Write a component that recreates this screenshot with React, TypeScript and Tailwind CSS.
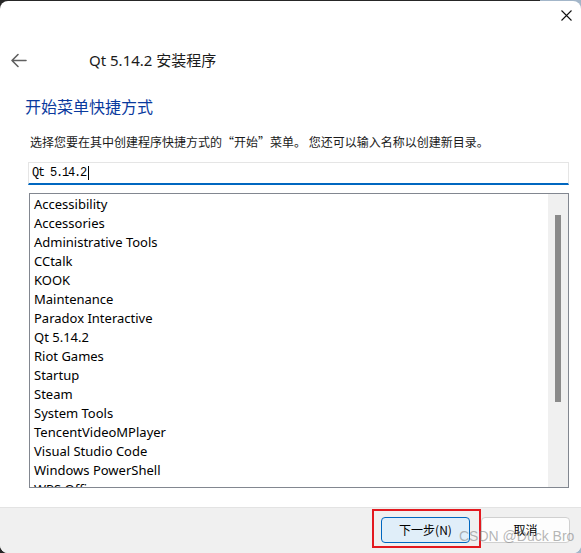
import React from 'react';

const folders = [
  'Accessibility',
  'Accessories',
  'Administrative Tools',
  'CCtalk',
  'KOOK',
  'Maintenance',
  'Paradox Interactive',
  'Qt 5.14.2',
  'Riot Games',
  'Startup',
  'Steam',
  'System Tools',
  'TencentVideoMPlayer',
  'Visual Studio Code',
  'Windows PowerShell',
  'WPS Office',
];

const uiFont = "font-['Noto_Sans','Noto_Sans_CJK_SC',sans-serif]";
const cjkFont = "font-['Noto_Sans_CJK_SC',sans-serif]";

const App: React.FC = () => {
  return (
    <div className="w-[581px] h-[553px] overflow-hidden bg-[linear-gradient(to_right,#262626_93%,#a3b6c9_93%)] pt-px">
      {/* ── Window ── */}
      <div className="relative flex flex-col h-[552px] bg-white rounded-[8px] overflow-hidden">
        {/* Title bar */}
        <div className="flex justify-end h-[44px] pt-[9px] pr-[9px]">
          <svg width="11" height="11" viewBox="0 0 11 11" className="shrink-0">
            <path d="M0.5 0.5L10.5 10.5M10.5 0.5L0.5 10.5" stroke="#111" strokeWidth="1.1" />
          </svg>
        </div>

        {/* Header */}
        <div className="flex items-center h-[30px] pl-[10px]">
          <svg width="17" height="15" viewBox="0 0 17 15" className="shrink-0">
            <path d="M16 7.5H2M8 1.5L2 7.5l6 6" fill="none" stroke="#606060" strokeWidth="1.6" strokeLinecap="round" strokeLinejoin="round" />
          </svg>
          <span className={`ml-[62px] text-[15px] text-[#1b1b1b] ${uiFont}`}>Qt 5.14.2 安装程序</span>
        </div>

        {/* ── Content ── */}
        <div className="flex flex-col flex-1 pl-[28px] pr-[12px]">
          <h1 className={`mt-[20px] -ml-[3px] text-[16px] leading-[22px] text-[#0a3a9e] ${cjkFont}`}>开始菜单快捷方式</h1>
          <p className={`mt-[17px] ml-[2px] text-[12px] leading-[16px] text-[#1a1a1a] whitespace-nowrap ${cjkFont}`}>
            选择您要在其中创建程序快捷方式的“开始”菜单。 您还可以输入名称以创建新目录。
          </p>

          {/* Folder name input */}
          <div className="mt-[12px] h-[23px] flex items-center pl-[3px] border border-[#e5e5e5] border-b-2 border-b-[#0067c0]">
            <span className="font-['Liberation_Mono',monospace] text-[12px] tracking-[-1.2px] text-black">Qt 5.14.2</span>
            <span className="w-px h-[14px] bg-black ml-[2px]"></span>
          </div>

          {/* Folder list */}
          <div className="mt-[8px] ml-px flex h-[295px] border border-[#828790] overflow-hidden">
            <div className={`flex-1 pl-[4px] pt-px overflow-hidden text-[13px] text-black ${uiFont}`}>
              {folders.map((name) => (
                <div key={name} className="h-[19px] leading-[19px] whitespace-nowrap">
                  {name}
                </div>
              ))}
            </div>
            <div className="w-[20px] shrink-0 bg-[#f0f0f0] pt-[21px] flex justify-center">
              <div className="w-[6px] h-[187px] bg-[#8a8a8a]"></div>
            </div>
          </div>
        </div>

        {/* ── Footer ── */}
        <div className="relative h-[46px] bg-[#f0f0f0] border-t border-[#e3e3e3] flex justify-end items-start pt-[9px] pr-[11px] gap-[11px]">
          <div className="relative">
            <button className={`w-[89px] h-[26px] rounded-[4px] border border-[#0067c0] bg-[#e0eef9] text-[12px] text-black ${cjkFont}`}>
              下一步(N)
            </button>
            <span className="absolute -left-[9px] -right-[11px] -top-[8px] -bottom-[5px] border-2 border-[#e3191f] pointer-events-none"></span>
          </div>
          <button className={`w-[89px] h-[26px] rounded-[4px] border border-[#d0d0d0] bg-[#fdfdfd] text-[12px] text-black ${cjkFont}`}>
            取消
          </button>
          <span className="absolute left-[459px] top-[18px] font-['Liberation_Sans',sans-serif] text-[14px] text-[rgba(120,120,120,0.55)] whitespace-nowrap pointer-events-none">
            CSDN @Duck Bro
          </span>
        </div>
      </div>
    </div>
  );
};

export default App;
